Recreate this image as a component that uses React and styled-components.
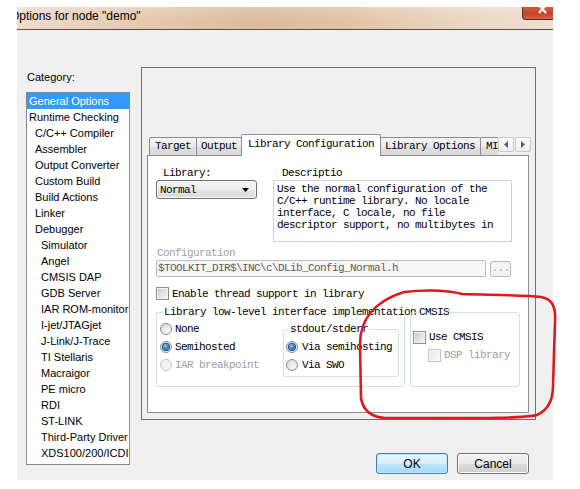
import React from 'react';
import styled, { createGlobalStyle, css } from 'styled-components';

const mono = `"Liberation Mono", "DejaVu Sans Mono", monospace`;
const sans = `"Liberation Sans", Arial, sans-serif`;

const Global = createGlobalStyle`
  html, body { margin: 0; padding: 0; background: #fff; }
  body { width: 580px; height: 489px; overflow: hidden; }
  * { box-sizing: border-box; }
`;

const Page = styled.div`
  position: relative;
  width: 580px;
  height: 489px;
  padding-top: 7px;
  padding-left: 17px;
`;

const Window = styled.div`
  width: 536px;
`;

const TitleBar = styled.div`
  height: 23px;
  display: flex;
  align-items: flex-start;
  overflow: hidden;
  border-bottom: 1px solid #5e4c40;
  background:
    linear-gradient(180deg, rgba(255,255,255,0.18), rgba(255,255,255,0) 60%),
    linear-gradient(90deg, #efdccd 0%, #e6cbb3 22%, #dcbc9c 45%, #e2c4a6 62%, #ebd6c3 82%, #eedfd1 100%);
`;

const Title = styled.div`
  margin-left: -7px;
  padding-top: 2px;
  font: 12px/14px ${sans};
  color: #000;
  white-space: nowrap;
`;

const CloseButton = styled.div`
  margin-left: auto;
  width: 31px;
  height: 13px;
  border: 1px solid #5a2518;
  border-top: none;
  border-right: none;
  border-radius: 0 0 0 4px;
  background: linear-gradient(180deg, #d4573c, #c2452c 60%, #d8664a);
  display: flex;
  justify-content: center;
  align-items: flex-start;
  padding-left: 10px;
`;

const Body = styled.div`
  height: 450px;
  background: #f0f0f0;
  display: grid;
  grid-template-columns: 104px 395px;
  column-gap: 11px;
  padding: 0 17px 0 9px;
`;

const LeftCol = styled.div`
  padding-top: 40px;
  display: flex;
  flex-direction: column;
  min-width: 0;
`;

const CategoryLabel = styled.div`
  font: 11px/14px ${sans};
  color: #000;
  padding-left: 1px;
`;

const CategoryList = styled.div`
  margin-top: 8px;
  height: 373px;
  border: 1px solid #828790;
  background: #fff;
  display: flex;
  flex-direction: column;
  overflow: hidden;
`;

const ListItem = styled.div`
  height: 16px;
  font: 11px/16px ${sans};
  padding-left: ${p => 2 + p.$depth * 6}px;
  color: ${p => (p.$selected ? '#fff' : '#000')};
  background: ${p => (p.$selected ? '#3399ff' : 'transparent')};
  white-space: nowrap;
`;

const RightCol = styled.div`
  padding-top: 37px;
  display: flex;
  flex-direction: column;
  min-width: 0;
`;

const OuterBox = styled.div`
  height: 353px;
  border: 1px solid #707070;
  padding: 66px 6px 6px 5px;
  display: flex;
  flex-direction: column;
  min-width: 0;
`;

const TabStrip = styled.div`
  height: 22px;
  margin-bottom: -1px;
  display: flex;
  position: relative;
  z-index: 1;
  min-width: 0;
`;

const TabsTrack = styled.div`
  flex: 1;
  min-width: 0;
  display: flex;
  align-items: flex-end;
  overflow: hidden;
  padding-left: 2px;
`;

const Tab = styled.div`
  flex: none;
  font: 11px/16px ${mono};
  letter-spacing: -0.6px;
  color: #000;
  padding: 0 ${p => p.$pad ?? 5}px;
  border: 1px solid #898c95;
  border-bottom: none;
  border-radius: 2px 2px 0 0;
  white-space: nowrap;
  ${p =>
    p.$active
      ? css`
          height: 22px;
          margin: 0 -1px 0 -1px;
          background: #fff;
          line-height: 18px;
          position: relative;
          z-index: 2;
        `
      : css`
          height: 18px;
          margin-bottom: 1px;
          background: linear-gradient(180deg, #f4f4f4 0%, #ececec 50%, #e1e1e1 51%, #d8d8d8 100%);
          & + & { margin-left: -1px; }
        `}
`;

const ScrollButtons = styled.div`
  flex: none;
  display: flex;
  gap: 1px;
  margin-top: 3px;
  height: 15px;
  margin-right: -2px;
`;

const ScrollButton = styled.div`
  width: 16px;
  height: 15px;
  border: 1px solid #c7c9cd;
  border-radius: 2px;
  background: linear-gradient(180deg, #fdfdfd, #eeeeee);
  display: flex;
  align-items: center;
  justify-content: center;
`;

const TabPanel = styled.div`
  flex: 1;
  min-width: 0;
  border: 1px solid #898c95;
  background: #fff;
  padding: 11px 0 0 8px;
  display: flex;
  flex-direction: column;
  font: 11px/12px ${mono};
  letter-spacing: -0.6px;
  color: #000;
  overflow: hidden;
`;

const TopRow = styled.div`
  display: flex;
`;

const LibraryCol = styled.div`
  width: 101px;
  flex: none;
  display: flex;
  flex-direction: column;
`;

const FieldLabel = styled.div`
  height: 12px;
  line-height: 12px;
  margin-left: ${p => p.$indent ?? 0}px;
  color: ${p => (p.$disabled ? '#a0a0a0' : '#000')};
  white-space: nowrap;
`;

const Combo = styled.div`
  margin-top: 1px;
  height: 19px;
  border: 1px solid #707070;
  border-radius: 3px;
  background: linear-gradient(180deg, #f4f4f4 0%, #eeeeee 50%, #e4e4e4 51%, #dcdcdc 100%);
  box-shadow: inset 0 0 0 1px #fafafa;
  display: flex;
  align-items: center;
  padding: 0 7px 0 3px;
  justify-content: space-between;
`;

const DescCol = styled.div`
  margin-left: 16px;
  display: flex;
  flex-direction: column;
`;

const DescBox = styled.div`
  margin-top: 1px;
  width: 239px;
  height: 62px;
  border: 1px solid #cdd3da;
  padding: 2px 0 0 3px;
  white-space: pre;
  line-height: 12px;
  overflow: hidden;
`;

const ConfigLabel = styled(FieldLabel)`
  margin-top: 5px;
`;

const ConfigRow = styled.div`
  margin-top: 1px;
  display: flex;
  align-items: flex-start;
`;

const ConfigInput = styled.div`
  width: 330px;
  height: 17px;
  border: 1px solid #b8bcc2;
  border-radius: 2px;
  background: #f7f7f7;
  color: #5a5a5a;
  padding-left: 1px;
  line-height: 15px;
  white-space: nowrap;
  overflow: hidden;
`;

const BrowseButton = styled.div`
  margin-left: 4px;
  margin-top: 1px;
  width: 21px;
  height: 16px;
  border: 1px solid #b5b9bd;
  border-radius: 3px;
  background: #f4f4f4;
  color: #a0a0a0;
  line-height: 12px;
  text-align: center;
`;

const CheckRow = styled.div`
  display: flex;
  align-items: center;
  height: ${p => p.$h ?? 13}px;
  margin-top: ${p => p.$mt ?? 0}px;
  margin-left: ${p => p.$indent ?? 0}px;
  color: ${p => (p.$disabled ? '#a0a0a0' : '#000')};
  white-space: nowrap;
`;

const CheckBox = styled.span`
  flex: none;
  width: 13px;
  height: 13px;
  margin-right: ${p => p.$gap ?? 3}px;
  border: 1px solid ${p => (p.$disabled ? '#c4c4c4' : '#8e8f8f')};
  background: ${p =>
    p.$disabled
      ? 'linear-gradient(135deg, #e8e8e8, #f8f8f8)'
      : 'linear-gradient(135deg, #c5c9ce 0%, #dfe1e3 50%, #f7f7f7 100%)'};
  box-shadow: inset 0 0 0 1px ${p => (p.$disabled ? '#f6f6f6' : '#f2f2f2')};
`;

const GroupsRow = styled.div`
  margin-top: 6px;
  display: flex;
  align-items: stretch;
  gap: 5px;
`;

const Group = styled.fieldset`
  margin: ${p => p.$mt ?? 0}px 0 0 0;
  width: ${p => p.$w}px;
  flex: none;
  border: 1px solid #d5dfe5;
  border-radius: 3px;
  padding: ${p => p.$pad};
  min-width: 0;
`;

const Legend = styled.legend`
  margin-left: ${p => p.$ml ?? 3}px;
  padding: 0 1px;
  line-height: 12px;
  height: 12px;
  white-space: nowrap;
  color: #000;
`;

const GroupInner = styled.div`
  display: flex;
  align-items: flex-start;
`;

const RadioCol = styled.div`
  width: 123px;
  flex: none;
  display: flex;
  flex-direction: column;
`;

const RadioRow = styled.div`
  height: 18px;
  display: flex;
  align-items: center;
  color: ${p => (p.$disabled ? '#a0a0a0' : '#000')};
  white-space: nowrap;
`;

const Radio = styled.span`
  flex: none;
  width: 12px;
  height: 12px;
  margin-right: ${p => p.$gap ?? 3}px;
  border-radius: 50%;
  border: 1px solid ${p => (p.$disabled ? '#c8c8c8' : '#8e8f8f')};
  background: ${p =>
    p.$disabled
      ? '#f2f2f2'
      : 'radial-gradient(circle at 65% 65%, #fbfbfb 0%, #e4e4e4 55%, #cdd0d4 100%)'};
  display: flex;
  align-items: center;
  justify-content: center;
  &::after {
    content: '';
    display: ${p => (p.$checked ? 'block' : 'none')};
    width: 6px;
    height: 6px;
    border-radius: 50%;
    background: radial-gradient(circle at 40% 35%, #9fd8fa 0%, #2f82c8 45%, #144e8f 100%);
    box-shadow: 0 0 0 1px #1b4f86;
  }
`;

const ButtonRow = styled.div`
  margin-top: 33px;
  padding-right: 7px;
  display: flex;
  justify-content: flex-end;
  gap: 9px;
`;

const DialogButton = styled.button`
  width: 72px;
  height: 21px;
  padding: 0;
  border-radius: 3px;
  font: 12px/1 ${sans};
  color: #000;
  border: 1px solid ${p => (p.$default ? '#3c7fb1' : '#707070')};
  background: ${p =>
    p.$default
      ? 'linear-gradient(180deg, #eaf6fd 0%, #d9f0fc 50%, #bee6fd 51%, #a7d9f5 100%)'
      : 'linear-gradient(180deg, #f2f2f2 0%, #ebebeb 50%, #dddddd 51%, #cfcfcf 100%)'};
  box-shadow: inset 0 0 0 1px ${p => (p.$default ? '#c4e7f9' : '#fbfbfb')};
`;

const Annotation = styled.svg`
  position: absolute;
  left: 0;
  top: 0;
  width: 580px;
  height: 489px;
  pointer-events: none;
`;

const categories = [
  ['General Options', 0],
  ['Runtime Checking', 0],
  ['C/C++ Compiler', 1],
  ['Assembler', 1],
  ['Output Converter', 1],
  ['Custom Build', 1],
  ['Build Actions', 1],
  ['Linker', 1],
  ['Debugger', 1],
  ['Simulator', 2],
  ['Angel', 2],
  ['CMSIS DAP', 2],
  ['GDB Server', 2],
  ['IAR ROM-monitor', 2],
  ['I-jet/JTAGjet', 2],
  ['J-Link/J-Trace', 2],
  ['TI Stellaris', 2],
  ['Macraigor', 2],
  ['PE micro', 2],
  ['RDI', 2],
  ['ST-LINK', 2],
  ['Third-Party Driver', 2],
  ['XDS100/200/ICDI', 2],
];

const description = [
  'Use the normal configuration of the',
  'C/C++ runtime library. No locale',
  'interface, C locale, no file',
  'descriptor support, no multibytes in',
].join('\n');

export default function App() {
  return (
    <>
      <Global />
      <Page>
        <Window>
          <TitleBar>
            <Title>Options for node "demo"</Title>
            <CloseButton>
              <svg width="10" height="8" viewBox="0 0 10 8">
                <path d="M1 -2 L8 6 M8 -2 L1 6" stroke="#fff" strokeWidth="2.2" />
              </svg>
            </CloseButton>
          </TitleBar>
          <Body>
            <LeftCol>
              <CategoryLabel>Category:</CategoryLabel>
              <CategoryList>
                {categories.map(([name, depth], i) => (
                  <ListItem key={name} $depth={depth} $selected={i === 0}>
                    {name}
                  </ListItem>
                ))}
              </CategoryList>
            </LeftCol>
            <RightCol>
              <OuterBox>
                <TabStrip>
                  <TabsTrack>
                    <Tab>Target</Tab>
                    <Tab $pad={4}>Output</Tab>
                    <Tab $active $pad={6}>Library Configuration</Tab>
                    <Tab>Library Options</Tab>
                    <Tab>MISRA C</Tab>
                  </TabsTrack>
                  <ScrollButtons>
                    <ScrollButton>
                      <svg width="4" height="7" viewBox="0 0 4 7">
                        <path d="M4 0 L0 3.5 L4 7 Z" fill="#4a5a78" />
                      </svg>
                    </ScrollButton>
                    <ScrollButton>
                      <svg width="4" height="7" viewBox="0 0 4 7">
                        <path d="M0 0 L4 3.5 L0 7 Z" fill="#4a5a78" />
                      </svg>
                    </ScrollButton>
                  </ScrollButtons>
                </TabStrip>
                <TabPanel>
                  <TopRow>
                    <LibraryCol>
                      <FieldLabel $indent={7}>Library:</FieldLabel>
                      <Combo>
                        <span>Normal</span>
                        <svg width="7" height="4" viewBox="0 0 7 4">
                          <path d="M0 0 L7 0 L3.5 4 Z" fill="#000" />
                        </svg>
                      </Combo>
                    </LibraryCol>
                    <DescCol>
                      <FieldLabel $indent={9}>Descriptio</FieldLabel>
                      <DescBox>{description}</DescBox>
                    </DescCol>
                  </TopRow>
                  <ConfigLabel $disabled $indent={1}>Configuration</ConfigLabel>
                  <ConfigRow>
                    <ConfigInput>$TOOLKIT_DIR$\INC\c\DLib_Config_Normal.h</ConfigInput>
                    <BrowseButton>...</BrowseButton>
                  </ConfigRow>
                  <CheckRow $mt={10}>
                    <CheckBox />
                    Enable thread support in library
                  </CheckRow>
                  <GroupsRow>
                    <Group $w={249} $pad="2px 0 9px 3px">
                      <Legend $ml={3}>Library low-level interface implementation</Legend>
                      <GroupInner>
                        <RadioCol>
                          <RadioRow>
                            <Radio />
                            None
                          </RadioRow>
                          <RadioRow>
                            <Radio $checked />
                            Semihosted
                          </RadioRow>
                          <RadioRow $disabled>
                            <Radio $disabled />
                            IAR breakpoint
                          </RadioRow>
                        </RadioCol>
                        <Group $w={116} $mt={3} $pad="3px 0 2px 2px">
                          <Legend $ml={3}>stdout/stderr</Legend>
                          <RadioRow>
                            <Radio $checked $gap={4} />
                            Via semihosting
                          </RadioRow>
                          <RadioRow>
                            <Radio $gap={4} />
                            Via SWO
                          </RadioRow>
                        </Group>
                      </GroupInner>
                    </Group>
                    <Group $w={110} $pad="10px 0 0 2px">
                      <Legend $ml={5}>CMSIS</Legend>
                      <CheckRow $h={18}>
                        <CheckBox />
                        Use CMSIS
                      </CheckRow>
                      <CheckRow $h={18} $indent={15} $disabled>
                        <CheckBox $disabled />
                        DSP library
                      </CheckRow>
                    </Group>
                  </GroupsRow>
                </TabPanel>
              </OuterBox>
              <ButtonRow>
                <DialogButton $default>OK</DialogButton>
                <DialogButton>Cancel</DialogButton>
              </ButtonRow>
            </RightCol>
          </Body>
        </Window>
        <Annotation viewBox="0 0 580 489">
          <path
            d="M404 292 C430 289, 452 291, 462 294 C490 295, 525 295, 541 297 C552 299, 556 306, 555 322 L553 386 C553 401, 548 410, 537 415 C520 419, 470 418, 385 418 C371 417, 363 411, 361 398 L360 344 C360 322, 372 302, 404 292 Z"
            fill="none"
            stroke="#e3161e"
            strokeWidth="2.6"
            strokeLinejoin="round"
          />
        </Annotation>
      </Page>
    </>
  );
}
